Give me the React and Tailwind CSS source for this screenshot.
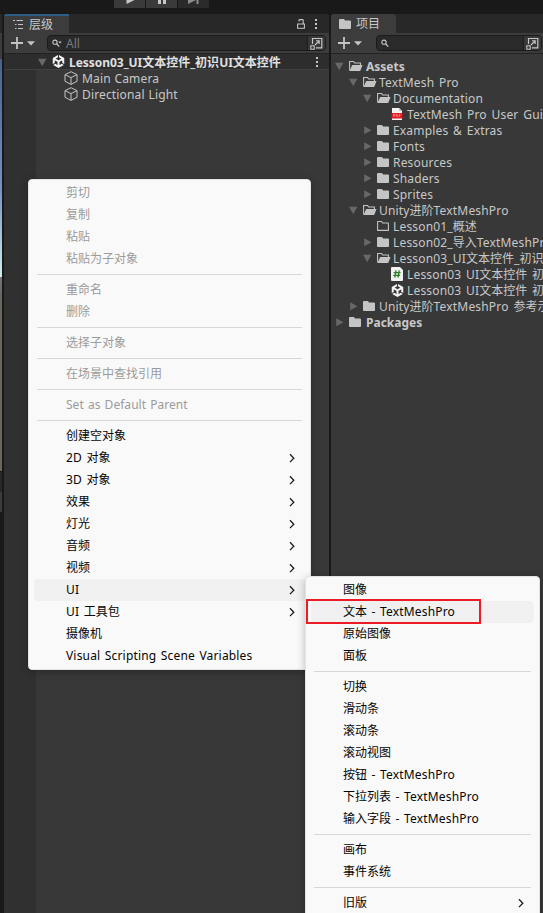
import React from 'react';
import { SiUnity } from 'react-icons/si';

const CJK = /([\u3400-\u9fff]+)/;

function Label({ text, className = '' }) {
  return (
    <span className={`whitespace-pre ${className}`}>
      {text.split(CJK).map((part, i) =>
        i % 2 ? (
          <span key={i} className="tracking-normal">{part}</span>
        ) : (
          <React.Fragment key={i}>{part}</React.Fragment>
        ),
      )}
    </span>
  );
}

function Triangle({ open = false }) {
  return (
    <svg className="block shrink-0" width="10" height="10" viewBox="0 0 10 10">
      <path d={open ? 'M1 1.8h8.4L5.2 9.3z' : 'M2.2 1.2v8L9.4 5.2z'} fill="#686868" />
    </svg>
  );
}

function Folder() {
  return (
    <svg className="block" width="14" height="12" viewBox="0 0 14 12">
      <path d="M0 2q0-1 1-1h3.6q.6 0 .9.6l.4.9H11q1 0 1 1V10q0 1-1 1H1q-1 0-1-1z" fill="#c4c4c4" />
    </svg>
  );
}

function FolderOpen() {
  return (
    <svg className="block" width="14" height="12" viewBox="0 0 14 12">
      <path d="M.6 10.4V1.5h4l1 1.5h5.8v2" fill="none" stroke="#c4c4c4" strokeWidth="1.1" />
      <path d="M3.2 4.9h10.3L11.2 11H.6z" fill="#c4c4c4" />
    </svg>
  );
}

function FolderEmpty() {
  return (
    <svg className="block" width="14" height="12" viewBox="0 0 14 12">
      <path d="M.6 10.4V1.5h4l1 1.5h5.8v7.4z" fill="none" stroke="#c4c4c4" strokeWidth="1.1" strokeLinejoin="round" />
    </svg>
  );
}

function UnityMark() {
  return <SiUnity className="block h-[13px] w-[13px] text-[#f2f2f2]" />;
}

function Cube() {
  return (
    <svg className="block" width="14" height="14" viewBox="0 0 14 14" fill="none" stroke="#c4c4c4" strokeWidth="1" strokeLinejoin="round">
      <path d="M7 .7 13 3.6v6.7L7 13.4 1 10.3V3.6zM1 3.6l6 3 6-3M7 6.6v6.8" />
    </svg>
  );
}

function Pdf() {
  return (
    <svg className="block" width="12" height="14" viewBox="0 0 12 14">
      <path d="M1 1h7l3 3v9H1z" fill="#f4f4f4" />
      <path d="M8 1v3h3z" fill="#c9c9c9" />
      <path d="M.5 6h11v5.5H.5z" fill="#e5151f" />
      <path d="M2.5 10V7.3h1.3v1.4H2.7M5.3 7.3v2.4h.8q.6-1.2 0-2.4zM8.2 10V7.3h1.5M8.2 8.7h1.2" stroke="#ffb4b4" strokeWidth=".6" fill="none" />
    </svg>
  );
}

function Script() {
  return (
    <svg className="block" width="12" height="14" viewBox="0 0 12 14">
      <path d="M0 1q0-1 1-1h8l3 3v10q0 1-1 1H1q-1 0-1-1z" fill="#f2f2f2" />
      <path d="M5 3.3 3.8 10.7M8.2 3.3 7 10.7M2.7 5.6h6.8M2.3 8.4h6.8" stroke="#2b7d2b" strokeWidth="1.3" />
    </svg>
  );
}

function Chevron() {
  return (
    <svg className="block" width="6" height="10" viewBox="0 0 6 10">
      <path d="M1 1.3 4.8 5.2 1 9.1" fill="none" stroke="#1c1c1c" strokeWidth="1.3" />
    </svg>
  );
}

function Kebab() {
  return (
    <svg className="block" width="3" height="10" viewBox="0 0 3 10" fill="#c4c4c4">
      <path d="M0 0h2v2H0zM0 4h2v2H0zM0 8h2v2H0z" />
    </svg>
  );
}

function AddButton() {
  return (
    <svg className="block" width="25" height="12" viewBox="0 0 25 12">
      <path d="M6 0v12M0 6h12" stroke="#c4c4c4" strokeWidth="1.8" />
      <path d="M16 4.2h8L20 8.4z" fill="#c4c4c4" />
    </svg>
  );
}

function SearchIcon({ arrow = false }) {
  return (
    <svg className="block" width="11" height="9" viewBox="0 0 11 9">
      <circle cx="3" cy="3.2" r="2.1" fill="none" stroke="#c4c4c4" strokeWidth="1.1" />
      <path d="M4.6 4.8 7.2 7.6" stroke="#c4c4c4" strokeWidth="1.3" />
      {arrow && <path d="M6.2 2.6h3.6L8 4.6z" fill="#c4c4c4" />}
    </svg>
  );
}

function PopOut() {
  return (
    <svg className="block" width="13" height="13" viewBox="0 0 13 13" fill="none" stroke="#c4c4c4">
      <path d="M2.5 7V1.5h9.3v9.3H6" strokeWidth="1.2" />
      <path d="M.8 8.8h3.4v3.4H.8z" strokeWidth="1.1" />
      <path d="M5 8 9 4M6 3.8h3.2V7" strokeWidth="1.1" />
    </svg>
  );
}

function Lock() {
  return (
    <svg className="block" width="8" height="10" viewBox="0 0 8 10" fill="none" stroke="#c4c4c4" strokeWidth="1.1">
      <path d="M.6 5h6.8v4.3H.6zM2 2.6V1.4Q2 .6 2.8.6h2.6q.8 0 .8.8V5" />
    </svg>
  );
}

const ICONS = { folder: Folder, open: FolderOpen, empty: FolderEmpty, pdf: Pdf, script: Script, unity: UnityMark };

const TREE = [
  { depth: 0, tri: 'open', icon: 'open', text: 'Assets', bold: true },
  { depth: 1, tri: 'open', icon: 'open', text: 'TextMesh Pro' },
  { depth: 2, tri: 'open', icon: 'open', text: 'Documentation' },
  { depth: 3, icon: 'pdf', text: 'TextMesh Pro User Guide' },
  { depth: 2, tri: 'shut', icon: 'folder', text: 'Examples & Extras' },
  { depth: 2, tri: 'shut', icon: 'folder', text: 'Fonts' },
  { depth: 2, tri: 'shut', icon: 'folder', text: 'Resources' },
  { depth: 2, tri: 'shut', icon: 'folder', text: 'Shaders' },
  { depth: 2, tri: 'shut', icon: 'folder', text: 'Sprites' },
  { depth: 1, tri: 'open', icon: 'open', text: 'Unity进阶TextMeshPro' },
  { depth: 2, icon: 'empty', text: 'Lesson01_概述' },
  { depth: 2, tri: 'shut', icon: 'folder', text: 'Lesson02_导入TextMeshPro' },
  { depth: 2, tri: 'open', icon: 'open', text: 'Lesson03_UI文本控件_初识' },
  { depth: 3, icon: 'script', text: 'Lesson03 UI文本控件 初' },
  { depth: 3, icon: 'unity', text: 'Lesson03 UI文本控件 初' },
  { depth: 1, tri: 'shut', icon: 'folder', text: 'Unity进阶TextMeshPro 参考示' },
  { depth: 0, tri: 'shut', icon: 'folder', text: 'Packages', bold: true },
];

const INDENT = ['pl-[3px]', 'pl-[17px]', 'pl-[31px]', 'pl-[45px]'];

function TreeRow({ depth, tri, icon, text, bold }) {
  const Icon = ICONS[icon];
  return (
    <div className={`flex h-4 items-center ${INDENT[depth]}`}>
      <div className="w-[15px] shrink-0">{tri && <Triangle open={tri === 'open'} />}</div>
      <div className={`shrink-0 ${depth === 0 ? 'w-[17px]' : 'w-4'}`}><Icon /></div>
      <Label text={text} className={`pt-[2px] ${bold ? 'font-bold' : 'tracking-[0.17px] [word-spacing:1.5px]'}`} />
    </div>
  );
}

const MENU = [
  { text: '剪切', off: true },
  { text: '复制', off: true },
  { text: '粘贴', off: true },
  { text: '粘贴为子对象', off: true },
  null,
  { text: '重命名', off: true },
  { text: '删除', off: true },
  null,
  { text: '选择子对象', off: true },
  null,
  { text: '在场景中查找引用', off: true },
  null,
  { text: 'Set as Default Parent', off: true },
  null,
  { text: '创建空对象' },
  { text: '2D 对象', sub: true },
  { text: '3D 对象', sub: true },
  { text: '效果', sub: true },
  { text: '灯光', sub: true },
  { text: '音频', sub: true },
  { text: '视频', sub: true },
  { text: 'UI', sub: true, active: true },
  { text: 'UI 工具包', sub: true },
  { text: '摄像机' },
  { text: 'Visual Scripting Scene Variables' },
];

const SUBMENU = [
  { text: '图像' },
  { text: '文本 - TextMeshPro', active: true },
  { text: '原始图像' },
  { text: '面板' },
  null,
  { text: '切换' },
  { text: '滑动条' },
  { text: '滚动条' },
  { text: '滚动视图' },
  { text: '按钮 - TextMeshPro' },
  { text: '下拉列表 - TextMeshPro' },
  { text: '输入字段 - TextMeshPro' },
  null,
  { text: '画布' },
  { text: '事件系统' },
  null,
  { text: '旧版', sub: true },
];

function MenuList({ items, className }) {
  return (
    <div className={`absolute rounded-[4px] border border-[#e3e3e3] bg-[#f9f9f9] px-[5px] py-[2px] shadow-[0_2px_8px_rgba(0,0,0,0.25)] ${className}`}>
      {items.map((item, i) =>
        item ? (
          <div
            key={i}
            className={`flex h-[22px] items-center justify-between rounded pr-[10px] pl-8 ${item.active ? 'bg-[#f0f0f0]' : ''} ${item.off ? 'text-[#9b9b9b]' : 'text-[#050505]'}`}
          >
            <Label text={item.text} className={item.off ? 'tracking-[0.03px] [word-spacing:1px]' : 'tracking-[0.17px] [word-spacing:1.2px]'} />
            {item.sub && <Chevron />}
          </div>
        ) : (
          <div key={i} className="flex h-[9px] items-center px-[3px]">
            <div className="h-px w-full bg-[#d7d7d7]" />
          </div>
        ),
      )}
    </div>
  );
}

function SearchField({ className, arrow, placeholder }) {
  return (
    <div className={`flex h-4 overflow-hidden rounded-[4px] border border-[#1b1b1b] bg-[#2a2a2a] ${className}`}>
      <div className="flex flex-1 items-center gap-[3px] border-r border-[#1f1f1f] pl-[4px]">
        <SearchIcon arrow={arrow} />
        <span className="pt-px text-[#7b7b7b]">{placeholder}</span>
      </div>
      <div className="flex w-[17px] items-center justify-center bg-[#383838]"><PopOut /></div>
    </div>
  );
}

export default function App() {
  return (
    <div className="relative flex h-[913px] w-[543px] flex-col overflow-hidden bg-[#191919] font-['Noto_Sans','Noto_Sans_CJK_SC',sans-serif] text-[12px] leading-[16px] text-[#c8c8c8]">
      <header className="flex h-[14px] shrink-0 items-start gap-px pl-[114px]">
        <div className="flex h-2 w-[31px] justify-center overflow-hidden bg-[#3a3a3a]">
          <svg width="10" height="8" viewBox="0 0 10 8"><path d="M1.500-4 9.500 0 1.500 4z" fill="#c8c8c8" /></svg>
        </div>
        <div className="flex h-2 w-[31px] justify-center overflow-hidden bg-[#3a3a3a]">
          <svg width="10" height="8" viewBox="0 0 10 8"><path d="M1 0h3v4H1zM6 0h3v4H6z" fill="#c8c8c8" /></svg>
        </div>
        <div className="flex h-2 w-[31px] justify-center overflow-hidden bg-[#2a2a2a]">
          <svg width="11" height="8" viewBox="0 0 11 8"><path d="M0-4 8 0 0 4zM8.500 0h2v4h-2z" fill="#8c8c8c" /></svg>
        </div>
      </header>

      <div className="flex min-h-0 flex-1">
        <aside className="mr-[2px] flex w-[2px] shrink-0 flex-col">
          <div className="h-[19px] bg-[#282828]" />
          <div className="h-[26px] bg-[#3c3c3c]" />
          <div className="h-[218px] bg-linear-to-b from-[#48618c] via-[#7893c4] via-60% to-[#d2eef0]" />
          <div className="h-[194px] bg-linear-to-b from-[#777] via-[#6a645e] via-10% to-[#6b6459]" />
          <div className="mt-[1px] h-[20px] bg-[#282828]" />
          <div className="h-5 bg-[#3c3c3c]" />
        </aside>

        <section className="mr-[2px] flex w-[325px] shrink-0 flex-col overflow-hidden rounded-t-[3px] bg-[#383838]">
          <div className="flex h-[19px] shrink-0 items-center justify-between bg-[#282828] pr-[11px]">
            <div className="flex h-full w-[65px] items-center gap-[6px] border-t-2 border-[#2c5d87] bg-[#3c3c3c] pl-[9px]">
              <svg width="10" height="10" viewBox="0 0 10 10" stroke="#c4c4c4">
                <path d="M0 .5h2M3.500 .5H10M2 4.500h1.500M5 4.500h5M2 8.500h1.500M5 8.500h5" />
              </svg>
              <span>层级</span>
            </div>
            <div className="flex items-center gap-[10px]"><Lock /><Kebab /></div>
          </div>
          <div className="flex h-[21px] shrink-0 items-center border-b border-[#232323] bg-[#3c3c3c] pr-[3px] pl-[7px]">
            <AddButton />
            <SearchField className="ml-[11px] flex-1" arrow placeholder="All" />
          </div>
          <div className="flex h-4 shrink-0 items-center border-b border-[#404040] bg-[#2d2d2d] pr-[10px] pl-[33px]">
            <div className="w-[15px]"><Triangle open /></div>
            <div className="w-[17px]"><UnityMark /></div>
            <Label text="Lesson03_UI文本控件_初识UI文本控件" className="flex-1 pt-[2px] font-bold tracking-[-0.04px] text-[#e0e0e0]" />
            <Kebab />
          </div>
          <div className="flex flex-1">
            <div className="w-8 bg-[#303030]" />
            <div className="flex flex-1 flex-col pl-[28px]">
              {['Main Camera', 'Directional Light'].map((name) => (
                <div key={name} className="flex h-4 items-center gap-1">
                  <Cube />
                  <Label text={name} className="pt-[2px] tracking-[0.15px] [word-spacing:0.500px]" />
                </div>
              ))}
            </div>
          </div>
        </section>

        <section className="flex min-w-0 flex-1 flex-col overflow-hidden rounded-tl-[3px] bg-[#383838]">
          <div className="flex h-[19px] shrink-0 bg-[#282828]">
            <div className="flex w-[65px] items-center gap-[3px] rounded-tr-[3px] bg-[#3c3c3c] pl-2">
              <Folder />
              <span>项目</span>
            </div>
          </div>
          <div className="flex h-[21px] shrink-0 items-center border-b border-[#232323] bg-[#3c3c3c] pr-px pl-[7px]">
            <AddButton />
            <SearchField className="ml-[13px] flex-1" />
          </div>
          <div className="flex flex-col pt-[4px]">
            {TREE.map((row, i) => <TreeRow key={i} {...row} />)}
          </div>
        </section>
      </div>

      <MenuList items={MENU} className="top-[179px] left-[28px] h-[491px] w-[283px]" />
      <MenuList items={SUBMENU} className="top-[576px] left-[305px] h-[345px] w-[235px]" />
      <div className="absolute top-[599px] left-[306px] h-[25px] w-[175px] border-2 border-[#ed1c24]" />
    </div>
  );
}
